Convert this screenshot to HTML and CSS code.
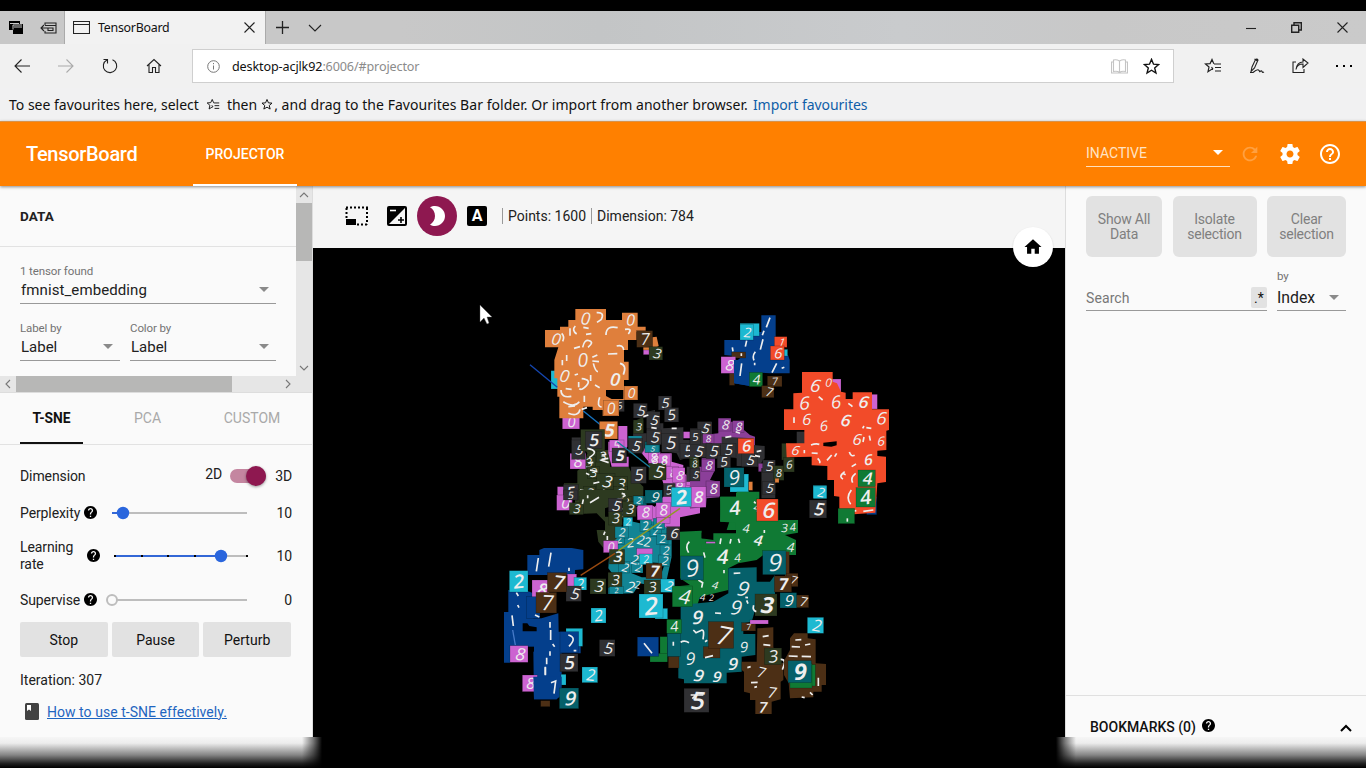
FILE: index.html
```html
<!DOCTYPE html>
<html lang="en">
<head>
<meta charset="utf-8">
<title>TensorBoard</title>
<link rel="stylesheet" href="styles.css">
</head>
<body>
<svg width="0" height="0" class="defs"><defs>
<symbol id="help" viewBox="2 2 20 20"><path d="M12 2C6.48 2 2 6.48 2 12s4.48 10 10 10 10-4.48 10-10S17.52 2 12 2zm1 17h-2v-2h2v2zm2.07-7.75l-.9.92C13.45 12.9 13 13.5 13 15h-2v-.5c0-1.1.45-2.1 1.17-2.83l1.24-1.26c.37-.36.59-.86.59-1.41 0-1.1-.9-2-2-2s-2 .9-2 2H8c0-2.21 1.79-4 4-4s4 1.79 4 4c0 .88-.36 1.68-.93 2.25z"/></symbol>
<symbol id="star" viewBox="0 0 16 16"><path d="M8 1.3l1.9 4.5 4.8.4-3.7 3.1 1.2 4.8L8 11.5l-4.200 2.600L5 9.300 1.300 6.200l4.800-.4z" fill="none" stroke="currentColor" stroke-width="1.300"/></symbol>
<symbol id="hub" viewBox="0 0 18 16"><path d="M10 6h7M11 9.500h6M11 13h6M9 11.500l-1-.4L4 13.800 5 9 1.500 6l4.600-.4L8 1.500l1.800 4.300M7.500 9l1.500 2" fill="none" stroke="currentColor" stroke-width="1.200"/></symbol>
</defs></svg>
<div class="screen">
  <div class="tabstrip">
    <div class="tabtools">
      <svg width="16" height="16" viewBox="0 0 16 16"><path d="M1 1h11v3h3v10H5v-4H1z"/><path d="M2 3.500h9M5 9.500V5h9M6 7h8" stroke="#c8c8c8" fill="none"/></svg>
      <svg width="17" height="14" viewBox="0 0 17 14" class="line"><path d="M5 4V2h11v10H5v-2M5 4.500h11M8 7H1M4 4L1 7l3 3M8 7h5v2.500H8z"/></svg>
    </div>
    <div class="tab">
      <svg width="17" height="15" viewBox="0 0 17 15" class="line"><path d="M.5 1.500h16v12H.5zM.5 4.500h16"/></svg>
      <span class="tabtitle">TensorBoard</span>
      <svg width="11" height="11" viewBox="0 0 11 11" class="line"><path d="M.5.5l10 10M10.500.5l-10 10"/></svg>
    </div>
    <svg class="line plus" width="13" height="13" viewBox="0 0 13 13"><path d="M6.500 0v13M0 6.500h13" stroke-width="1.300"/></svg>
    <svg class="line" width="14" height="8" viewBox="0 0 14 8"><path d="M1 1l6 6 6-6"/></svg>
    <div class="winbtns">
      <svg class="line" width="10" height="10" viewBox="0 0 10 10"><path d="M0 5.500h10"/></svg>
      <svg class="line" width="11" height="11" viewBox="0 0 11 11"><path d="M.7 3.200h7v7h-7zM3 3V.8h7.300V8H8" stroke-width="1.400"/></svg>
      <svg class="line" width="11" height="11" viewBox="0 0 11 11"><path d="M.5.5l10 10M10.500.5l-10 10"/></svg>
    </div>
  </div>
  <div class="navbar">
    <div class="navicons">
      <svg class="line" width="16" height="16" viewBox="0 0 16 16"><path d="M16 8H1M7.500 1.500L1 8l6.500 6.500"/></svg>
      <svg class="line dim" width="16" height="16" viewBox="0 0 16 16"><path d="M0 8h15M8.500 1.500L15 8l-6.500 6.500"/></svg>
      <svg class="line" width="16" height="16" viewBox="0 0 16 16"><path d="M10.500 1.700a6.700 6.700 0 1 1-5.600.3M1.500 1.500h4v4"/></svg>
      <svg class="line" width="16" height="16" viewBox="0 0 16 16"><path d="M1 8l7-6.500L15 8M3 6.500v8h3.500v-5h3v5H13v-8"/></svg>
    </div>
    <div class="address">
      <svg class="line info" width="13" height="13" viewBox="0 0 13 13"><circle cx="6.500" cy="6.500" r="5.800"/><path d="M6.500 5.500v4M6.500 3v1.200"/></svg>
      <span class="url"><b>desktop-acjlk92</b>:6006/#projector</span>
      <svg class="line pale" width="17" height="15" viewBox="0 0 17 15"><path d="M8.500 2v11M8.500 2C6 .5 4 .5 2.500 1v11.500c2-.5 4-.5 6 .8 2-1.300 4-1.300 6-.8V1c-1.500-.5-3.500-.5-6 1M2.500 3H.5v11h16V3h-2"/></svg>
      <svg class="addstar" width="17" height="17"><use href="#star"/></svg>
    </div>
    <div class="acticons">
      <svg width="18" height="16"><use href="#hub"/></svg>
      <svg class="line" width="16" height="16" viewBox="0 0 16 16"><path d="M2 13.500L3 9 6.500 1.500q1.500-1 2.500.5L5.500 10zM5.500 1l3 2M1 14.500h3q4-3.500 5.500-2.500t1 2q2-2 2.500-.5t2 .5"/></svg>
      <svg class="line" width="17" height="16" viewBox="0 0 17 16"><path d="M4 4H1v10.500h11V11M4 11.500q1-5.500 7-5.500V9.500l5-4.500-5-4v3Q5 4 4 11.500z"/></svg>
      <svg width="16" height="4" viewBox="0 0 16 4"><path d="M0 1h2v2H0zM7 1h2v2H7zM14 1h2v2h-2z"/></svg>
    </div>
  </div>
  <div class="favbar"><span class="f1">To see favourites here, select</span><svg width="14" height="13"><use href="#hub"/></svg><span class="f2">then</span><svg width="12" height="13"><use href="#star"/></svg><span class="f3">, and drag to the Favourites Bar folder. Or import from another browser.</span><span class="favlink">Import favourites</span></div>

  <header class="appbar">
    <div class="brand">TensorBoard</div>
    <div class="apptab">PROJECTOR</div>
    <div class="appright">
      <div class="inactive"><span>INACTIVE</span><i class="caret light"></i></div>
      <svg class="faded" width="22" height="22" viewBox="0 0 24 24"><path d="M17.650 6.350C16.200 4.900 14.210 4 12 4c-4.420 0-7.990 3.580-7.990 8s3.570 8 7.990 8c3.730 0 6.840-2.550 7.730-6h-2.080c-.82 2.330-3.040 4-5.650 4-3.310 0-6-2.690-6-6s2.690-6 6-6c1.660 0 3.140.69 4.220 1.780L13 11h7V4l-2.350 2.350z"/></svg>
      <svg width="24" height="24" viewBox="0 0 24 24"><path d="M19.430 12.980c.04-.32.07-.64.07-.98s-.03-.66-.07-.98l2.110-1.650c.19-.15.24-.42.12-.64l-2-3.460c-.12-.22-.39-.3-.61-.22l-2.490 1c-.52-.4-1.080-.73-1.690-.98l-.38-2.650C14.460 2.180 14.250 2 14 2h-4c-.25 0-.46.18-.49.42l-.38 2.650c-.61.25-1.170.59-1.690.98l-2.490-1c-.23-.09-.49 0-.61.22l-2 3.460c-.13.22-.07.49.12.64l2.110 1.650c-.04.32-.07.65-.07.98s.03.66.07.98l-2.110 1.650c-.19.15-.24.42-.12.64l2 3.460c.12.22.39.3.61.22l2.490-1c.52.4 1.080.73 1.690.98l.38 2.650c.03.24.24.42.49.42h4c.25 0 .46-.18.49-.42l.38-2.650c.61-.25 1.170-.59 1.690-.98l2.490 1c.23.09.49 0 .61-.22l2-3.460c.12-.22.07-.49-.12-.64l-2.110-1.650zM12 15.500c-1.930 0-3.500-1.570-3.500-3.500s1.570-3.500 3.500-3.500 3.500 1.570 3.500 3.500-1.570 3.500-3.500 3.500z"/></svg>
      <svg width="24" height="24" viewBox="0 0 24 24"><path d="M11 18h2v-2h-2v2zm1-16C6.480 2 2 6.480 2 12s4.480 10 10 10 10-4.480 10-10S17.520 2 12 2zm0 18c-4.410 0-8-3.590-8-8s3.590-8 8-8 8 3.590 8 8-3.590 8-8 8zm0-14c-2.210 0-4 1.790-4 4h2c0-1.100.9-2 2-2s2 .9 2 2c0 2-3 1.750-3 5h2c0-2.250 3-2.500 3-5 0-2.210-1.790-4-4-4z"/></svg>
    </div>
  </header>

  <main class="work">
    <aside class="left">
      <section class="data">
        <div class="datamain">
          <div class="datahead">DATA</div>
          <div class="databody">
            <div class="small">1 tensor found</div>
            <div class="select wide"><span>fmnist_embedding</span><i class="caret"></i></div>
            <div class="pair">
              <div class="colA"><div class="small">Label by</div><div class="select a"><span>Label</span><i class="caret"></i></div></div>
              <div class="colB"><div class="small">Color by</div><div class="select"><span>Label</span><i class="caret"></i></div></div>
            </div>
          </div>
          <div class="hscroll">
            <svg class="line" width="16" height="16" viewBox="0 0 16 16"><path d="M10 4L6 8l4 4"/></svg><div class="hthumb"></div><svg class="line end" width="16" height="16" viewBox="0 0 16 16"><path d="M6 4l4 4-4 4"/></svg>
          </div>
        </div>
        <div class="vscroll">
          <svg class="line" width="16" height="16" viewBox="0 0 16 16"><path d="M4 10l4-4 4 4"/></svg><div class="vthumb"></div><svg class="line down" width="16" height="16" viewBox="0 0 16 16"><path d="M4 6l4 4 4-4"/></svg>
        </div>
      </section>
      <nav class="tabs"><div class="t1">T-SNE</div><div class="t2">PCA</div><div class="t3">CUSTOM</div></nav>
      <section class="params">
        <div class="row r1"><span>Dimension</span><span class="d2">2D</span><span class="switch"><i></i></span><span class="val">3D</span></div>
        <div class="row r2"><span class="lab">Perplexity</span><svg class="q" width="13" height="13"><use href="#help"/></svg>
          <svg class="slider" width="150" height="16"><path d="M7 8h135" class="trk"/><path d="M7 8h11" class="act"/><circle cx="18" cy="8" r="6.200" class="knob"/></svg><span class="val">10</span></div>
        <div class="row r3"><span class="lab">Learning<br>rate</span><svg class="q q3" width="13" height="13"><use href="#help"/></svg>
          <svg class="slider" width="150" height="16"><path d="M10 8h133" class="trk"/><path d="M10 8h106" class="act"/><path d="M9 8h2M36 8h2M62 8h2M89 8h2M141 8h2" class="tick"/><circle cx="116" cy="8" r="6.200" class="knob"/></svg><span class="val">10</span></div>
        <div class="row r4"><span class="lab">Supervise</span><svg class="q" width="13" height="13"><use href="#help"/></svg>
          <svg class="slider" width="150" height="16"><path d="M12 8h130" class="trk"/><circle cx="7" cy="8" r="5" class="hollow"/></svg><span class="val">0</span></div>
        <div class="buttons"><div>Stop</div><div>Pause</div><div>Perturb</div></div>
        <div class="iter">Iteration: 307</div>
        <div class="how"><svg width="14" height="17" viewBox="0 0 14 17"><rect width="14" height="17" rx="1.500" fill="#424242"/><path d="M2 2h4v6L4 6.600 2 8z" fill="#fff"/></svg><a>How to use t-SNE effectively.</a></div>
      </section>
    </aside>

    <section class="center">
      <div class="tools">
        <svg width="24" height="20" viewBox="0 0 24 20"><path d="M1 1.500h22M22 2v16.500M1.500 2v12M12 18.500h11" fill="none" stroke="#000" stroke-width="2" stroke-dasharray="2 2"/><path d="M1 13h10v6H1z"/></svg>
        <svg width="20" height="20" viewBox="0 0 20 20"><rect width="20" height="20" rx="2"/><path d="M18 2v16H2z" fill="#f5f5f5"/><path d="M3 4.500h6" stroke="#fff" stroke-width="1.600"/><path d="M11 14h6M14 11v6" stroke="#000" stroke-width="1.600"/></svg>
        <div class="moon"><svg width="24" height="24" viewBox="0 0 24 24"><path d="M10 2c-1.820 0-3.530.5-5 1.350C7.990 5.080 10 8.300 10 12s-2.010 6.920-5 8.650C6.470 21.500 8.180 22 10 22c5.520 0 10-4.480 10-10S15.520 2 10 2z" fill="#fff"/></svg></div>
        <div class="abox">A</div>
        <span class="stat s1">Points: 1600</span><span class="stat s2">Dimension: 784</span>
      </div>
      <div class="canvas">
        <svg id="plot" width="752" height="520" viewBox="313 248 752 520"></svg>
        <div class="home"><svg width="24" height="24" viewBox="0 0 24 24"><path d="M10 20v-6h4v6h5v-8h3L12 3 2 12h3v8z"/></svg></div>
      </div>
    </section>

    <aside class="right">
      <div class="rbtns"><div class="b1">Show All<br>Data</div><div class="b2">Isolate<br>selection</div><div class="b3">Clear<br>selection</div></div>
      <div class="searchrow">
        <div class="search"><span>Search</span><span class="regex">.*</span></div>
        <div class="by"><div class="small">by</div><div class="select ix"><span>Index</span><i class="caret"></i></div></div>
      </div>
      <div class="bookmarks"><span>BOOKMARKS (0)</span><svg width="13" height="13"><use href="#help"/></svg><svg class="up" width="12" height="8" viewBox="0 0 12 8"><path d="M1 7l5-5 5 5" fill="none" stroke="#000" stroke-width="2"/></svg></div>
    </aside>
  </main>
  <div class="fade"></div>
</div>
<script src="plot.js"></script>
</body>
</html>
```
FILE: styles.css
```css
* { box-sizing: border-box; }
body { margin: 0; background: #000; font-family: Roboto, sans-serif; color: #212121; overflow: hidden; }
svg { display: block; flex: none; }
.defs { position: absolute; }
.screen { width: 1366px; height: 768px; padding-top: 11px; display: flex; flex-direction: column; position: relative; overflow: hidden; background: #000; }
.line { fill: none; stroke: #222; stroke-width: 1.1; }
.tabstrip { height: 33px; flex: none; display: flex; align-items: center; background: linear-gradient(90deg, #c8c8c8 0 400px, #c3c5c6 600px, #c9cbcd 900px, #c8c8c8 1100px, #cacaca); }
.tabtools { width: 64px; padding-left: 8px; display: flex; gap: 16px; align-items: center; }
.tab { width: 202px; height: 33px; background: #f2f2f2; border-left: 1px solid #aaa; border-right: 1px solid #aaa; display: flex; align-items: center; padding: 0 10px 0 8px; font: 12.4px "Noto Sans", sans-serif; color: #111; }
.tabtitle { margin-left: 8px; flex: 1; letter-spacing: -.25px; }
.plus { margin: 0 19px 0 10px; }
.winbtns { margin-left: auto; display: flex; gap: 35px; align-items: center; padding-right: 18px; }
.navbar { height: 44px; flex: none; background: #f1f1f1; display: flex; align-items: center; }
.navicons { display: flex; gap: 28px; padding-left: 14px; width: 192px; }
.dim { stroke: #aaa; }
.address { width: 982px; height: 34px; border: 1px solid #cfcfcf; background: #fff; display: flex; align-items: center; padding: 0 13px 0 14px; font: 12.6px "Noto Sans", sans-serif; color: #8b8b8b; }
.info { stroke: #777; stroke-width: 1; }
.addstar { color: #111; }
.pale { stroke: #c4c4c4; margin-right: 15px; }
.url { flex: 1; margin-left: 12px; letter-spacing: -.13px; }
.url b { font-weight: 400; color: #111; }
.acticons { display: flex; align-items: center; margin-left: auto; gap: 27px; padding-right: 14px; }
.favbar { height: 33px; flex: none; background: #f1f1f2; display: flex; align-items: center; padding-left: 9px; font: 14px "Noto Sans", sans-serif; color: #111; white-space: nowrap; }
.favbar svg { margin: 0 7px; }
.favbar .f2 + svg { margin: 0 1px 0 4px; }
.favbar .f3 { letter-spacing: .04px; }
.favlink { color: #0f5ea8; margin-left: 5px; letter-spacing: -.05px; }
.appbar { height: 65px; flex: none; background: #ff8000; color: #fff; display: flex; border-top: 1px solid #d8924a; position: relative; z-index: 2; box-shadow: 0 1px 3px rgba(0,0,0,.45); }
.brand { width: 193px; padding-left: 26px; font-size: 20px; font-weight: 500; line-height: 64px; letter-spacing: -.3px; }
.apptab { width: 104px; text-align: center; font-size: 14px; font-weight: 500; line-height: 64px; border-bottom: 2px solid #fff; letter-spacing: 0; }
.appright { margin-left: auto; display: flex; align-items: center; fill: #fff; padding-right: 24px; gap: 16px; }
.appright .faded { opacity: .25; margin: 0 1px 0 -7px; }
.inactive { width: 144px; height: 27px; border-bottom: 1px solid #ffe0bd; display: flex; align-items: center; justify-content: space-between; font-size: 14px; color: #ffe3c4; padding-right: 7px; margin-bottom: 2px; }
.caret { border: 5px solid transparent; border-top-color: #8a8a8a; border-bottom: 0; width: 0; height: 0; }
.caret.light { border-top-color: #fff; }
.work { flex: 1; display: flex; min-height: 0; }
.left { width: 313px; background: #fafafa; display: flex; flex-direction: column; border-right: 1px solid #ddd; }
.data { height: 207px; display: flex; flex: none; border-bottom: 1px solid #ddd; }
.datamain { width: 296px; display: flex; flex-direction: column; }
.datahead { height: 61px; border-bottom: 1px solid #e2e2e2; padding-left: 20px; line-height: 60px; font-size: 13.500px; font-weight: 700; letter-spacing: .1px; }
.databody { flex: 1; padding: 17px 20px 0 20px; }
.small { font-size: 11.500px; line-height: 14px; color: #737373; letter-spacing: -.1px; }
.select { height: 26px; border-bottom: 1px solid #999; display: flex; align-items: center; justify-content: space-between; padding: 0 7px 2px 1px; font-size: 15px; }
.wide { letter-spacing: .09px; }
.pair { display: flex; gap: 10px; margin-top: 17px; }
.colA { width: 100px; }
.colB { flex: 1; }
.hscroll { height: 16px; background: #e6e6e6; display: flex; }
.hscroll svg, .vscroll svg { stroke: #777; }
.hthumb { width: 216px; background: #b7b7b6; }
.end { margin-left: auto; }
.vscroll { width: 16px; background: #e6e6e6; display: flex; flex-direction: column; }
.vthumb { height: 58px; background: #b7b7b6; }
.vscroll svg:first-child { margin-top: 1px; }
.down { margin: auto 0 16px; }
.tabs { height: 52px; flex: none; display: flex; border-bottom: 1px solid #e2e2e2; font-size: 14px; line-height: 51px; color: #a9a9a9; padding-left: 20px; text-align: center; }
.t1 { width: 63px; color: #111; font-weight: 700; border-bottom: 2px solid #111; font-size: 13.800px; }
.t2 { width: 129px; }
.t3 { width: 80px; }
.params { padding: 11px 20px 0; font-size: 14px; }
.row { display: flex; align-items: center; position: relative; letter-spacing: -.1px; }
.r1 { height: 40px; } .r2 { height: 34px; } .r3 { height: 52px; } .r4 { height: 36px; }
.row .val { width: 40px; text-align: right; margin-left: auto; }
.d2 { margin-left: auto; padding-bottom: 5px; }
.r1 .val { margin: 0; width: 26px; }
.switch { width: 36px; height: 20px; margin-left: 8px; padding: 3px 0; }
.switch::before { content: ""; display: block; height: 14px; border-radius: 7px; background: #c486a0; }
.switch i { display: block; width: 20px; height: 20px; border-radius: 50%; background: #8e1850; margin: -17px 0 0 16px; box-shadow: 0 1px 3px rgba(0,0,0,.4); }
.lab { width: 61px; line-height: 17px; white-space: nowrap; }
.q { margin: -2px 8px 0 3px; fill: #000; }
.q3 { margin-left: 6px; margin-right: 5px; }
.trk { stroke: #bdbdbd; stroke-width: 2; } .act { stroke: #3367d6; stroke-width: 2; } .tick { stroke: #000; stroke-width: 2; }
.knob { fill: #2a66dd; } .hollow { fill: #fafafa; stroke: #bdbdbd; stroke-width: 2; }
.slider { margin-right: -10px; }
.buttons { display: flex; gap: 4px; margin-top: 4px; width: 271px; }
.buttons div { flex: 1; height: 35px; line-height: 36px; text-align: center; background: #e2e2e2; border-radius: 2px; color: #111; }
.iter { line-height: 46px; }
.how { display: flex; align-items: center; gap: 8px; height: 17px; padding-left: 5px; color: #1f65c0; }
.how a { text-decoration: underline; letter-spacing: .04px; }
.center { width: 752px; display: flex; flex-direction: column; }
.tools { height: 62px; flex: none; background: #f5f5f5; display: flex; align-items: center; padding: 0 0 2px 32px; font-size: 14px; }
.tools > svg:nth-child(2) { margin-left: 18px; }
.moon { width: 40px; height: 40px; border-radius: 50%; background: #8e1850; display: flex; align-items: center; justify-content: center; margin: 0 10px; }
.abox { width: 20px; height: 20px; border-radius: 2px; background: #000; color: #fff; font: 700 16px/20px Roboto, sans-serif; text-align: center; margin-right: 15px; }
.stat { border-left: 1px solid #999; padding-left: 5px; line-height: 16px; letter-spacing: 0; }
.s2 { margin-left: 5px; }
.canvas { flex: 1; background: #000; position: relative; }
.home { position: absolute; right: 12px; top: -21px; width: 40px; height: 40px; border-radius: 50%; background: #fff; padding: 8px; box-shadow: 0 1px 2px rgba(0,0,0,.2); }
.home svg { transform: scale(.85); }
#plot text { font-family: "Open Sans", sans-serif; text-anchor: middle; fill: #eee; }
.right { width: 301px; background: #fafafa; display: flex; flex-direction: column; border-left: 1px solid #ddd; }
.rbtns { display: flex; padding: 10px 0 0 20px; gap: 10.500px; font-size: 14px; color: #7f7f7f; text-align: center; letter-spacing: -.2px; }
.rbtns div { height: 61px; border-radius: 6px; background: #e2e2e2; line-height: 15px; padding-top: 16px; }
.b1 { width: 76px; } .b2 { width: 84px; } .b3 { width: 79px; }
.searchrow { display: flex; align-items: flex-end; height: 54px; padding: 0 20px; gap: 10px; }
.search { width: 181px; height: 28px; border-bottom: 1px solid #999; display: flex; justify-content: space-between; align-items: center; font-size: 14px; color: #777; letter-spacing: .1px; padding-top: 2px; }
.regex { width: 16px; height: 21px; background: #e2e2e2; border-radius: 2px; color: #111; text-align: center; line-height: 22px; }
.by { width: 69px; }
.ix { height: 28px; font-size: 15.800px; padding: 2px 7px 0 0; }
.bookmarks { margin-top: auto; height: 73px; border-top: 1px solid #e0e0e0; display: flex; align-items: flex-start; padding: 23px 14px 0 24px; font-size: 14px; font-weight: 500; line-height: 16px; letter-spacing: 0; color: #111; }
.bookmarks svg { margin: 0 0 0 6px; }
.bookmarks .up { margin: 5px 0 0 auto; }
.fade { position: absolute; left: 0; right: 0; bottom: 0; height: 31px; z-index: 3; background: linear-gradient(90deg, transparent 302px, rgba(0,0,0,.5) 313px, #000 322px, #000 1056px, rgba(0,0,0,.5) 1065px, transparent 1076px), linear-gradient(#f6f6f6 0, #ececec 20%, #858585 58%, #222 85%, #000); }
```
FILE: plot.js
```js
const colors = { o: '#df7f3c', b: '#043f8c', c: '#1db9d1', m: '#cc63d1', p: '#8b3f99', k: '#303033', v: '#2d3a20', n: '#4c2f15', g: '#107a34', t: '#05606a', r: '#f24b29', h: '#128494' };
const plot = document.getElementById('plot');
const NS = 'http://www.w3.org/2000/svg';
function el(parent, name, attrs, text) {
  const e = document.createElementNS(NS, name);
  for (const k in attrs) e.setAttribute(k, attrs[k]);
  if (text) e.textContent = text;
  parent.appendChild(e);
  return e;
}
function tile(g, color, x, y, w, h, digit, weight, turn) {
  if (color !== '-') el(g, 'rect', { x, y, width: w, height: h, fill: colors[color], stroke: 'rgba(0,0,0,.28)', 'stroke-width': 2 });
  if (!digit) return;
  const s = Math.min(w, h) * 1.02, cx = x + w / 2, cy = y + h / 2;
  el(g, 'text', { 'font-size': s, 'font-weight': weight || 400, transform: `translate(${cx} ${cy + s * .36}) rotate(${turn}) skewX(-9)` }, digit);
}
// Each line is one of:
//   P color points               cluster silhouette
//   M path                       pen marks of overlapping digits
//   L color path                 projected edge
//   T color x,y w,h digit weight sprite tile ("-" means no fill)
//   S color x,y size digit ...   run of small sprites at the listed points
function cluster(x, y, rows) {
  const g = el(plot, 'g', { transform: `translate(${x} ${y}) scale(.33333)` });
  rows.trim().split('\n').forEach((row, i) => {
    const f = row.trim().split(' ');
    const turn = (i * 37) % 21 - 6;
    if (f[0] === 'P') el(g, 'polygon', { points: f.slice(2).join(' '), fill: colors[f[1]] || '#000' });
    else if (f[0] === 'M') el(g, 'path', { d: f.slice(1).join(' '), stroke: '#eee', fill: 'none', 'stroke-width': 5 });
    else if (f[0] === 'L') el(g, 'path', { d: f.slice(2).join(' '), stroke: f[1], fill: 'none', 'stroke-width': 4 });
    else if (f[0] === 'T') {
      const [px, py] = f[2].split(',').map(Number), [w, h] = f[3].split(',').map(Number);
      tile(g, f[1], px, py, w, h, f[4], f[5], turn);
    } else if (f[0] === 'S') {
      const size = Number(f[2]);
      f.slice(4).forEach((p, n) => {
        const [px, py] = p.split(',').map(Number);
        tile(g, f[1], px, py, size, size, f[3], 400, (n * 29) % 25 - 8);
      });
    }
  });
}

cluster(500, 300, `
P v 250,395 315,395 315,455 330,470 330,500 386,500 400,530 430,560 430,600 400,600 400,650 340,650 330,620 260,640 225,630 225,600 192,595 192,550 232,550 232,512 250,500 262,460 250,440
P v 400,365 430,350 430,420 400,430
S v 36 3 250,470 290,450 262,500 285,545 250,560 240,590 330,570 360,590 345,620
P m 325,425 355,425 355,378 382,378 382,440 360,470 386,470 386,500 335,500 325,460
P m 420,430 480,440 480,460 515,460 515,485 550,495 550,520 600,545 600,640 500,660 450,640 480,600 500,580 480,520 450,490 425,460
S m 36 8 445,455 475,462 560,520 500,500 520,530
P k 385,420 400,420 400,400 440,400 440,335 465,330 465,370 490,370 490,385 550,382 550,420 575,420 575,470 540,480 530,460 500,455 490,425 470,435 440,430 430,455 385,455
P h 385,408 425,408 425,440 385,420
T t 435,425 45,32
T h 435,435 42,22 5
T k 400,310 42,44 5
T k 475,288 40,42 5
T k 493,323 43,43 5
T k 440,335 40,50 5
T k 440,390 45,44 5
T k 485,400 52,56 5
T k 540,430 50,46 5
T m 550,395 20,20
T k 570,385 45,50 5
T v 400,360 30,40 3
T m 187,345 52,42 0
T k 345,300 28,35 5
T c 153,212 30,55
P o 135,90 180,90 180,80 205,80 205,60 226,60 226,27 318,27 318,60 366,60 366,38 413,38 413,80 437,80 437,95 410,95 410,120 384,120 384,150 372,150 372,185 386,185 386,240 372,240 372,258 413,258 413,300 357,300 357,348 308,348 308,330 278,330 278,320 250,320 250,355 178,355 178,290 172,290 172,235 163,235 163,180 175,142 135,142
P x 318,270 370,270 370,297 335,297 318,288
L #1546b0 M90,194 L172,262
T - 140,92 48,48 0
T - 228,30 50,50 0
T - 367,37 46,46 0
T - 220,152 55,55 0
T - 163,202 50,50 0
T - 315,212 52,52 0 600
T o 373,258 40,42 0
T o 310,302 45,45 0
M M185,100q10,10 3,24M210,85v22M226,78q-12,12 4,24M290,38q25,-2 14,20l-13,9M318,105q0,-30 35,-22M375,88q24,-4 10,14M250,82l16,3M258,103l16,-2M248,142q5,-25 20,-20t-4,20M222,145l18,-5M324,162l28,-1M350,138q20,-5 21,12M292,165l-15,7M277,183l20,2M280,190q6,24 14,25M200,165v18M187,180v16M224,225l10,-3M272,225v18M245,236q30,3 15,20t-22,10M236,246v16M360,190q22,5 10,34M215,268l-18,-2M183,270q0,25 31,19M190,305q33,20 48,0M205,340q30,12 35,-12M205,320l20,-2M253,287v19M299,292q-10,28 6,29M285,255l14,8M245,328l16,-5
P o 430,115 470,110 476,138 450,155 430,150
T m 430,150 30,14
T n 410,92 48,50 7
T v 447,140 41,40 3
L #1672c0 M250,333 L302,375
T o 298,364 55,53 5 700
T k 215,412 42,65 5
T m 210,460 47,47 8
T k 215,420 40,58 5
T v 242,388 72,65
T k 256,394 50,52 5 600
T m 328,420 44,34 5
T k 385,415 42,45 5
T k 336,444 44,45 5 700
T m 172,560 50,40
T k 190,553 45,47 5 600
T v 290,520 55,48 3
T v 340,530 42,42 3
T v 340,560 42,42 3
T k 393,500 46,50 5
T v 446,490 52,50 5
L #167d9a M352,425 L450,502
T - 446,462 36,34 8
T - 476,466 32,32 8
T m 517,503 38,45 8
T k 560,500 40,45 5
T v 568,470 28,30 3
T t 400,588 40,30 9
T k 490,550 36,40 5
M M262,445q40,8 5,28M305,465l14,-2M325,475l-20,3M265,490l15,-3M270,510l22,5M258,520l10,4M280,550l18,-4M240,570l17,3M270,590l19,-5M515,385l15,0M430,350l15,-5M470,385l-16,-2M302,480l24,8
`);

cluster(690, 300, `
P b 103,120 150,120 150,96 214,96 214,46 257,46 257,165 294,165 299,180 299,220 240,220 210,218 205,250 180,258 132,250 132,190 155,170 103,165
T c 150,70 58,38
T c 150,74 40,46 2
T n 125,156 42,18
T n 118,220 16,36
T m 93,170 44,50 8
P b 132,180 180,180 180,258 132,250
M M240,53l-11,29M222,92l-5,14M219,118l-8,31M170,122l-4,18M127,142l2,12M154,160v8M155,190l-5,38M196,155q-10,12 -4,26M194,188v8M260,190l-14,28M275,205l8,-3
T c 275,148 18,20
T r 253,110 38,32 1
T r 241,138 42,42 6
T g 178,217 40,43 4
T n 232,228 44,32 7
T n 215,257 37,36 7
P p 85,355 122,355 122,365 162,365 162,390 180,405 195,410 195,465 150,470 120,450 40,430 40,405 85,400
P k 0,395 22,395 22,365 66,365 66,435 95,435 95,410 190,415 190,435 224,438 224,475 205,500 140,498 140,475 120,472 120,504 82,504 82,475 0,470
P p 0,500 35,500 35,475 75,475 75,510 60,540 88,545 88,592 50,595 48,620 0,626
T k 23,365 40,40 5
T p 85,355 38,38 8
T p 128,362 34,36 8
T p 38,402 34,28 8
T k 0,388 32,46 5
T - 0,432 48,44 5
T k 48,430 44,46 5
T k 92,430 46,42 5
T k 82,466 40,38 5
T k 155,460 48,40 5
M M106,412l18,-3M150,400l-13,-5M200,455l14,-3M210,470l-15,-3
T r 144,415 48,46 6 600
T v 0,478 28,28 8
T k 0,505 30,38 5
T p 35,478 40,36 8
T p 48,543 42,46 8
T p 205,490 20,25
T k 214,505 42,90
T k 218,545 38,38 5
T k 218,480 38,38 5
T v 250,497 32,44 8
T o 255,535 12,13
T v 275,430 25,50
T k 320,395 25,55
T v 280,472 33,44 6
T m 425,237 28,40
T m 540,283 22,44
T b 530,590 30,54
P r 336,216 428,216 428,245 441,250 453,275 467,278 467,297 488,297 488,277 546,277 546,328 597,328 597,390 589,392 589,450 562,452 562,468 588,470 588,546 562,550 556,638 470,644 470,632 448,628 448,590 432,588 432,540 412,540 412,498 365,496 365,470 290,472 288,430 343,430 343,390 282,390 282,328 310,328 310,280 336,278
P x 400,428 440,424 440,436 424,440 400,438
T - 343,230 56,52 6 500
T - 396,230 34,34 0
T - 312,282 58,54 6 500
T - 410,280 54,52 6 500
T - 490,280 52,50 6 600
T - 544,328 54,52 6 500
T - 325,335 46,46 6 500
T - 380,345 42,66 6 500
T - 435,335 54,50 6 600
T - 475,388 46,60 6 500
T - 552,402 38,42 6
T - 512,455 44,48 6 600
T - 290,430 44,40 6
M M312,352v17M386,290l12,10M475,310l12,9M483,315l4,5M522,378l-4,7M529,383l15,2M522,411l-3,15M538,407l3,15M363,435q14,-5 25,-2M343,450v10M365,459l18,1M383,475q10,10 5,14M425,465l-14,16M440,460l-6,10M478,456q5,15 16,10M485,500l13,-8M464,515q-20,15 -5,22M458,520l9,4M497,520q-17,13 -9,28M484,570q-18,23 -2,43M485,634l14,-2M520,634l30,-4
T g 504,510 52,50 4 600
T g 444,625 50,46
T g 498,563 58,58 4 600
M M472,655v10
T c 120,522 56,54
T o 176,545 12,26
T t 102,503 60,58 9
P g 140,575 208,575 208,598 265,598 265,670 322,660 322,690 110,690 118,665 90,665 92,590 140,590
T - 103,587 65,65 4 600
M M182,600l12,6M200,615q-20,12 -12,35l12,-4M145,690q2,-20 15,-18M225,680l4,3M280,672l-4,16M295,676l16,7
T r 200,597 62,66 6 600
T c 369,556 41,38 2
T k 358,600 52,54 5 600
T m 0,560 48,62 8 600
`);

cluster(490, 490, `
P v 270,0 415,0 415,22 370,25 362,40 345,48 345,95 320,70 265,72 238,68 238,45 270,40
T m 200,15 47,46 0
T v 238,38 42,36 3
T k 220,0 42,30 5
P h 380,120 400,115 400,95 430,95 450,100 480,85 520,88 545,130 545,200 530,270 500,290 450,280 430,310 355,312 355,280 370,255 355,235 360,160 380,160
P x 440,215 525,220 510,262 455,262 425,250
P m 440,50 485,45 510,60 570,45 570,145 540,120 500,95 442,90
S h 34 2 450,90 480,105 500,130 510,165 505,195 425,215 385,215 370,130 490,85
P v 320,120 345,120 345,80 395,80 395,130 370,155 350,185 325,155
T k 355,25 42,45 5
T v 398,35 40,45 3
T v 355,65 42,40 3
T c 400,82 28,28 2
T t 465,0 52,40 9
T h 430,18 30,26 2
T m 443,46 44,42 8
T m 498,38 44,44 8
T m 500,82 40,18
T k 530,110 40,40 6
T h 375,110 40,34 2
T m 340,152 44,36 0
T - 402,135 38,46 2
T - 430,128 38,42 2
T - 450,135 38,42 2
T m 440,175 48,20
T c 448,192 40,32 2
T - 410,190 40,38 2
T v 358,178 46,44 3 600
T v 354,247 42,46 3
T h 358,290 42,22 2
T - 395,265 44,50 2
T - 425,265 30,38 2
T n 468,220 48,46 7 700
T v 462,270 50,42 3
T c 512,267 42,40 2
T v 300,266 48,46 3
L #9a4a10 M272,256 L375,190
L #8e9a24 M385,182 L570,55
M M280,28l-3,14M293,16v9M300,38l27,-16M345,125l-4,10M352,138v12M395,10l10,3M398,20l9,-4
P b 112,195 148,195 148,180 162,174 245,174 280,180 280,238 255,240 255,255 112,255
P b 55,300 105,300 130,310 130,385 155,385 205,370 206,425 228,425 272,428 272,490 215,490 215,580 200,628 132,628 130,480 60,478 60,518 42,518 42,366 55,366
P x 98,400 98,424 140,424 140,412 118,408 112,400
P x 106,470 132,470 132,485 106,485
T n 152,632 28,18
T c 228,415 50,54
T b 210,425 56,62
T c 58,242 56,64 2 600
T m 126,270 52,56 8 600
T b 110,320 40,65
T m 232,252 28,42
T c 252,262 38,38 2
T k 228,288 46,46 5
T n 172,248 58,58 7 600
T n 138,307 62,62 7 500
M M183,188l-7,42M145,204l-6,40M237,233v10M79,308l6,10M83,345l4,8M66,376l4,32M180,396v17M182,420v30M188,462l6,8M180,484v13M170,503v20M166,532v24M235,435q28,8 2,34M251,482h8M135,375l13,6
L #477bc8 M68,420 L76,465
T m 60,467 54,50 8 500
T m 97,555 45,50 8
T c 213,553 15,32
P b 130,560 215,560 215,615 200,628 132,628
M M166,530v24M183,578l14,-5l-5,38
T t 208,594 58,62 9 600
T k 210,491 54,54 5 600
T c 303,354 45,45 2
T k 328,449 47,50 5
T c 276,531 47,47 2
T c 495,355 38,32
T c 447,312 72,72 2 600
`);

cluster(660, 490, `
P g 180,20 228,20 228,8 290,8 290,35 340,90 414,90 414,128 375,135 408,150 408,195 310,195 290,210 235,220 205,235 205,300 120,320 110,352 37,350 37,290 90,285 60,265 60,125 125,122 125,145 160,150 160,130 228,130 228,98 182,95
P x 125,128 140,128 140,145 125,145
T m 138,155 28,12
P g 125,160 170,160 170,175 125,175
T - 195,25 58,58 4 600
T - 270,20 34,64 4
T - 238,95 36,40 4
T - 355,95 34,38 3
T - 382,92 32,38 4
T - 268,128 44,44 4 600
T - 370,148 38,46 4
T - 155,168 60,64 4 600
T - 215,180 34,46 4
T - 145,260 32,50 4
M M88,155q-14,14 -2,33M131,187l4,16M183,145l-3,17M213,147l-3,14M235,146l4,13M192,240v10M115,270l13,8l-3,15M313,120v9M282,35l5,5
P t 205,235 290,232 290,275 330,275 345,255 345,325 290,345 275,395 250,400 250,432 286,432 286,495 245,500 245,545 200,548 200,580 72,580 72,568 55,565 55,535 25,500 22,430 62,425 62,345 160,335 205,310
T g 0,440 22,75
T g -30,490 52,26
T b -68,441 64,58
M M-48,460l24,30
T t 22,430 40,70
T n 25,500 32,34
P n 375,185 388,185 388,260 375,260
T r 290,27 64,66 6 600
T t 308,182 70,72 9 500
T t 62,198 68,72 9 500
T g 38,288 60,62 4
T - 112,300 28,42 4
T - 140,305 26,36 2
T g 20,388 45,42 4
T - 210,265 65,60 9
T - 195,320 58,64 9 500
T - 82,352 56,60 9 600
T - 65,475 50,62 9 500
T - 85,530 50,52 9 600
T - 145,535 44,50 9 600
T - 190,497 52,50 9 600
T - 230,442 42,58 9
T n 380,250 34,40 7
T n 408,315 38,38 7
T t 360,308 50,46 9
T n 343,258 52,48 7 700
T n 245,398 42,25 7
T m 270,390 55,12
T v 285,312 66,66 3 700
M M221,250l20,-1M256,322l8,1M260,331l4,10M281,346q-5,15 8,19M165,369l18,1M100,420l8,8l18,-8q8,0 3,28M40,455v12M62,457q10,-8 25,1M135,455l7,-4
T n 130,470 50,34
T n 145,395 76,80 7
M M135,503l24,-6
P n 292,415 340,412 340,470 350,515 370,520 370,570 362,575 362,628 335,635 335,672 286,672 286,630 270,630 270,610 252,605 252,545 245,540 245,515 290,515
T v 313,474 52,50 3 500
T - 278,525 42,42 7
T - 310,580 44,54 7 500
T - 284,630 46,44 7 600
M M308,440l18,-3M310,464l21,2M262,533l10,-3M273,578l20,-1M283,592l8,-2M362,508q20,-1 5,31
P n 402,430 443,430 443,445 467,448 467,520 498,522 498,585 485,585 485,605 460,605 460,622 390,625 386,580 372,555 372,512 390,480 390,445
T g 398,524 68,64
T g 390,520 66,74
T t 384,512 70,66 9 700
M M406,450l18,-1M395,470l25,1M435,465l16,-3M386,498l27,1M425,499l28,1M475,563v25M425,621l9,2M450,607l8,8
T c 442,382 49,48 2
T k 72,595 75,72 5 600
M M92,615h38M97,626l10,-10
T c 34,-8 60,58 2 700
T c 460,-12 40,38 2
`);

// Mouse pointer over the scene
el(plot, 'path', { d: 'M480 305v17l4-4 3 6 2-1-2-6h5z', fill: '#fff', stroke: '#555', 'stroke-width': .4 });
```
